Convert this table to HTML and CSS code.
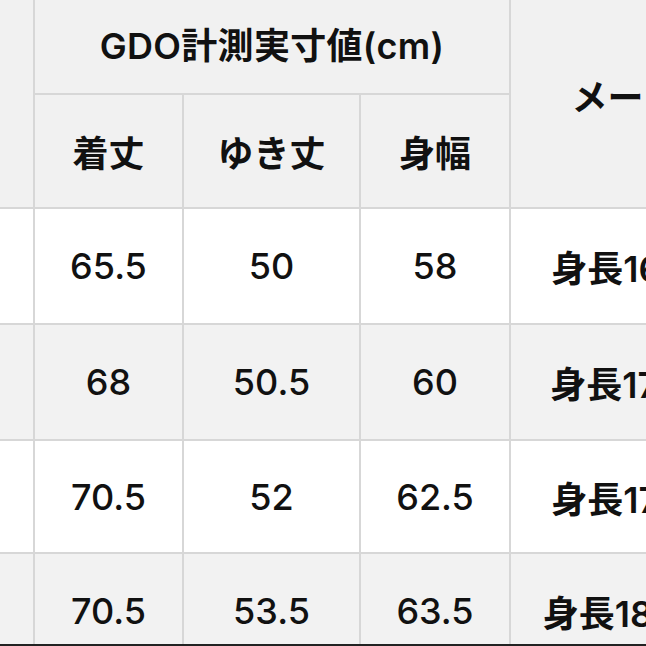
FILE: index.html
```html
<!DOCTYPE html>
<html lang="ja">
<head>
<meta charset="utf-8">
<title>GDO計測実寸値</title>
<link rel="stylesheet" href="styles.css">
</head>
<body>
<div class="frame">
  <table class="size-table">
    <colgroup>
      <col class="c0"><col class="c1"><col class="c2"><col class="c3"><col class="c4">
    </colgroup>
    <thead>
      <tr class="h1">
        <th rowspan="2" class="lab"></th>
        <th colspan="3" class="gdo">GDO計測実寸値(cm)</th>
        <th rowspan="2" class="maker maker-head">メーカー推奨値</th>
      </tr>
      <tr class="h2">
        <th>着丈</th>
        <th>ゆき丈</th>
        <th>身幅</th>
      </tr>
    </thead>
    <tbody>
      <tr class="odd r1"><td class="lab">S</td><td class="num">65.5</td><td class="num">50</td><td class="num">58</td><td class="maker">身長165〜175cm</td></tr>
      <tr class="even r2"><td class="lab">M</td><td class="num">68</td><td class="num">50.5</td><td class="num">60</td><td class="maker">身長170〜180cm</td></tr>
      <tr class="odd r3"><td class="lab">L</td><td class="num">70.5</td><td class="num">52</td><td class="num">62.5</td><td class="maker">身長175〜185cm</td></tr>
      <tr class="even r4"><td class="lab">XL</td><td class="num">70.5</td><td class="num">53.5</td><td class="num">63.5</td><td class="maker maker-wide">身長180〜190cm</td></tr>
    </tbody>
  </table>
  <div class="edge"></div>
</div>
</body>
</html>
```
FILE: styles.css
```css
html, body {
  margin: 0;
  padding: 0;
  background: #ffffff;
  overflow: hidden;
}
.frame {
  width: 646px;
  height: 646px;
  overflow: hidden;
  position: relative;
}
.size-table {
  border-collapse: collapse;
  table-layout: fixed;
  width: 912px;
  margin: -10px 0 0 -40px;
  font-family: "Inter", "Noto Sans CJK JP", sans-serif;
  font-weight: 600;
  font-size: 36px;
  color: #111111;
}
.c0 { width: 73px; }
.c1 { width: 149px; }
.c2 { width: 177px; }
.c3 { width: 150px; }
.c4 { width: 363px; }
.size-table th,
.size-table td {
  border: 2px solid #d7d7d7;
  text-align: center;
  vertical-align: middle;
  padding: 0;
  white-space: nowrap;
  overflow: hidden;
  font-weight: 600;
}
.size-table td.num { font-weight: 500; }
.size-table .lab { color: transparent; }
.gdo { letter-spacing: 0.3px; }
.size-table .maker-head { padding: 0 0 10px 12px; }
.size-table .maker-wide { padding-right: 12px; }
thead th { background: #f1f1f1; }
.h1 { height: 103px; }
.h2 { height: 114px; }
.r1, .r2 { height: 116px; }
.r3 { height: 113px; }
.r4 { height: 116px; }
.odd td { background: #ffffff; }
.even td { background: #f2f2f2; }
.edge {
  position: absolute;
  left: 0;
  right: 0;
  bottom: 0;
  height: 2px;
  background: #222222;
}
```
